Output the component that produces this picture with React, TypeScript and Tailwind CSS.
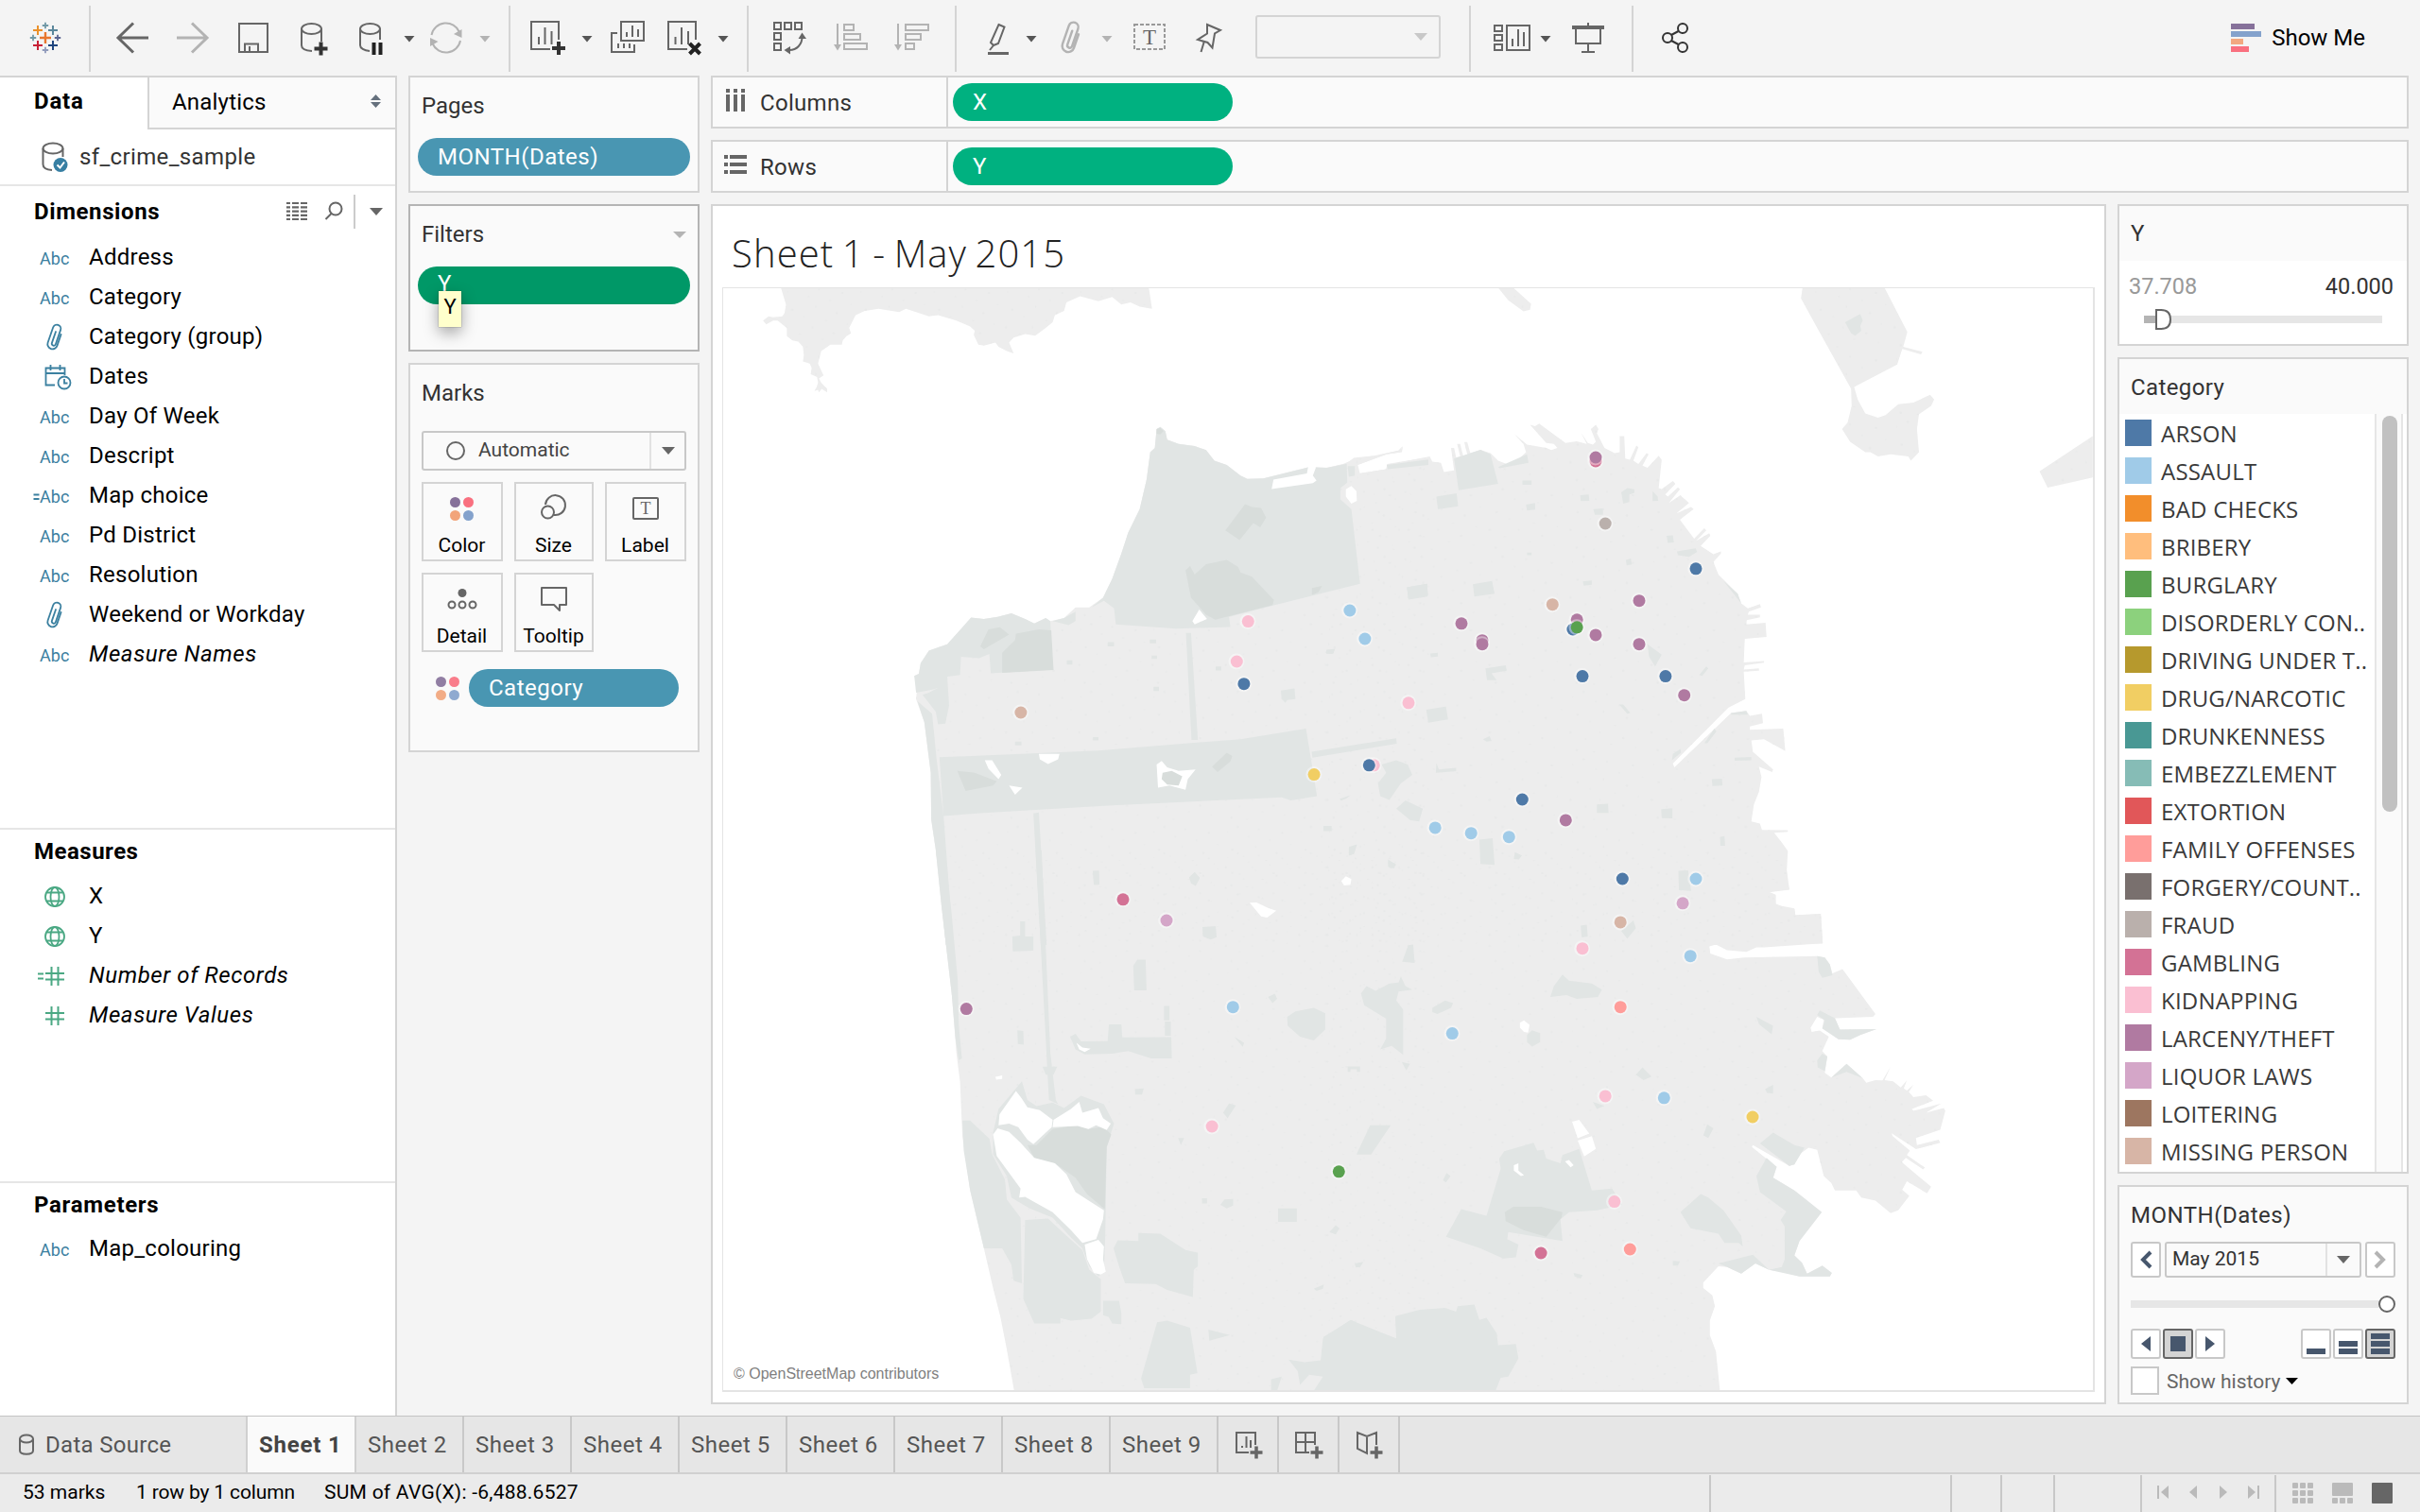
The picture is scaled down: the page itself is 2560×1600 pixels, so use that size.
import React from "react";

const ui = "font-['Roboto',sans-serif]";

/* ---------- shared bits ---------- */

function Caret({ w = 14, h = 8, color = "#666" }: { w?: number; h?: number; color?: string }) {
  return (
    <svg width={w} height={h} viewBox="0 0 14 8" preserveAspectRatio="none" className="shrink-0">
      <path d="M0 0H14L7 8Z" fill={color} />
    </svg>
  );
}

/* One slice of the toolbar; drawings use toolbar coordinates. */
function Cell({ x, w, children }: { x: number; w: number; children?: React.ReactNode }) {
  return (
    <svg
      width={w}
      height={80}
      viewBox={`${x} 0 ${w} 80`}
      className="shrink-0"
      fill="none"
      stroke="#666"
      strokeWidth={2}
    >
      {children}
    </svg>
  );
}

function Sep() {
  return <div className="mt-1.5 h-[70px] w-0.5 shrink-0 bg-[#d4d4d4]" />;
}

function Tri({ x, c = "#555" }: { x: number; c?: string }) {
  return <path d={`M${x - 5.5} 38H${x + 5.5}L${x} 44.5Z`} fill={c} stroke="none" />;
}

function Plus({ x, y, r, c, s = 2 }: { x: number; y: number; r: number; c: string; s?: number }) {
  return <path d={`M${x - r} ${y}H${x + r}M${x} ${y - r}V${y + r}`} stroke={c} strokeWidth={s} />;
}

function ClipShape() {
  return (
    <path
      d="M5.2 -5V7.6a5.2 5.2 0 0 1 -10.4 0V-9.4a4.2 4.2 0 0 1 8.4 0V6.6a2.1 2.1 0 0 1 -4.2 0V-6"
      strokeLinecap="round"
    />
  );
}

function Toolbar() {
  const g = "#b3b3b3";
  return (
    <div className="flex h-20 items-start bg-[#f4f4f4]">
      <Cell x={0} w={94}>
        <Plus x={48} y={40} r={6} c="#e8762d" s={2.4} />
        <Plus x={40} y={32} r={5} c="#eb912b" />
        <Plus x={56} y={32} r={5} c="#5b879b" />
        <Plus x={40} y={48} r={5} c="#c72035" />
        <Plus x={56} y={48} r={5} c="#1f457e" />
        <Plus x={48} y={27} r={3.2} c="#7199a6" s={1.8} />
        <Plus x={48} y={53} r={3.2} c="#8f9abb" s={1.8} />
        <Plus x={35} y={40} r={3.2} c="#7199a6" s={1.8} />
        <Plus x={61} y={40} r={3.2} c="#5c6692" s={1.8} />
      </Cell>
      <Sep />
      <Cell x={96} w={442}>
        <path d="M141 24.5L125 40L141 55.5M125 40H157" strokeWidth={3} />
        <path d="M203 24.5L219 40L203 55.5M219 40H187" stroke={g} strokeWidth={3} />
        <path d="M253 25H283V55H253ZM259 55V46.500H273V55M264 49V55" />
        <ellipse cx={329.500} cy={30.500} rx={10.500} ry={5.500} />
        <path d="M319 30.500V48C319 51 323 53.500 330 54M340 30.500V44" />
        <Plus x={339.500} y={51.500} r={7} c="#333" s={4} />
        <ellipse cx={391.500} cy={30.500} rx={10.500} ry={5.500} />
        <path d="M381 30.500V48C381 51 385 53.500 391 54M402 30.500V42" />
        <path d="M395.500 45V58M402.500 45V58" stroke="#222" strokeWidth={4} />
        <Tri x={433} />
        <path d="M456.500 37A15.500 15.500 0 0 1 486 34M487 43A15.500 15.500 0 0 1 457.500 46" stroke={g} />
        <path d="M480 36L488.500 31V40ZM463.500 44L455 40V49Z" fill={g} stroke="none" />
        <Tri x={513} c={g} />
      </Cell>
      <Sep />
      <Cell x={540} w={250}>
        <path d="M591 42V23H562V52H582M570 39V47M576.500 29V47M583.500 33V47" />
        <Plus x={591} y={51} r={7} c="#333" s={4} />
        <Tri x={621} />
        <path d="M657 23H681V43H657ZM663 34V39M669 27V39M675 31V39M653 35H647V55H671V47M654 46V51M660 46V51M666 46V51" />
        <path d="M736 42V23H707V52H727M714.500 39V47M721 29V47M728 33V47" />
        <path d="M729.500 46L740.500 57M740.500 46L729.500 57" stroke="#222" strokeWidth={4} />
        <Tri x={765} />
      </Cell>
      <Sep />
      <Cell x={792} w={218}>
        <path d="M819 24H826V31H819ZM830 24H837V31H830ZM841 24H848V31H841ZM819 35H826V42H819ZM819 46H826V53H819Z" />
        <path d="M835 53C843 53 848.500 47 848.500 39" />
        <path d="M844.500 41L848.500 34.500L853 41ZM836 49L829.500 53L836 57.500Z" fill="#666" stroke="none" />
        <path d="M886 25V50M893 26H903V32H893ZM893 36H910V42H893ZM893 46H917V52H893Z" stroke={g} />
        <path d="M882 47H890L886 53.500Z" fill={g} stroke="none" />
        <path d="M950 25V50M958 26H982V32H958ZM958 36H974V42H958ZM958 46H967V52H958Z" stroke={g} />
        <path d="M946 47H954L950 53.500Z" fill={g} stroke="none" />
      </Cell>
      <Sep />
      <Cell x={1012} w={316}>
        <path d="M1056.500 26L1062.500 28.500L1056 46L1051 48L1048 45ZM1051 48L1047 53" />
        <path d="M1045 56.500H1067" strokeWidth={3} />
        <Tri x={1091} />
        <g stroke={g} transform="translate(1133 40) rotate(19) scale(1.22)">
          <ClipShape />
        </g>
        <Tri x={1171} c={g} />
        <rect x={1200} y={26} width={32} height={26} stroke="#999" strokeDasharray="4 2" />
        <text
          x={1216}
          y={47}
          textAnchor="middle"
          fill="#666"
          stroke="none"
          className="font-['Liberation_Serif',serif] text-[23px]"
        >
          T
        </text>
        <path d="M1277 26L1291 32L1285 35.500L1282.500 50.500L1277.500 45L1267 42L1277 35.500ZM1273.500 45L1270.500 55" />
      </Cell>
      <div className="mt-4 flex h-[46px] w-[196px] shrink-0 items-center justify-end rounded-[3px] border-2 border-[#d4d4d4] pr-3">
        <Caret color="#c8c8c8" />
      </div>
      <div className="w-[30px]" />
      <Sep />
      <Cell x={1556} w={170}>
        <path d="M1581 27H1589V33H1581ZM1581 37H1589V43H1581ZM1581 47H1589V53H1581ZM1594 27H1618V53H1594ZM1600 41V49M1606 31V49M1612 34V49" />
        <Tri x={1635} />
        <path d="M1667 30V46H1693V30M1680 24V28M1680 46V55M1673 55H1687" />
        <path d="M1663 29H1697" strokeWidth={4} />
      </Cell>
      <Sep />
      <Cell x={1728} w={80}>
        <g stroke="#333">
          <circle cx={1764} cy={40} r={5} />
          <circle cx={1780} cy={30} r={5} />
          <circle cx={1780} cy={50} r={5} />
          <path d="M1768 37L1775.500 33M1768 43L1775.500 47" />
        </g>
      </Cell>
      <div className="ml-auto flex h-20 items-center gap-[11px] pr-[58px]">
        <div className="flex flex-col gap-0.5">
          <div className="h-1.5 w-[25px] bg-[#86719a]" />
          <div className="h-1.5 w-8 bg-[#84a2cc]" />
          <div className="h-1.5 w-[13px] bg-[#f2a880]" />
          <div className="h-1.5 w-[19px] bg-[#f9707f]" />
        </div>
        <span className="text-2xl text-black">Show Me</span>
      </div>
    </div>
  );
}

/* ---------- data pane ---------- */

type Kind = "abc" | "eqabc" | "clip" | "date" | "globe" | "num" | "eqnum";

function FieldIcon({ kind }: { kind: Kind }) {
  const blue = "#3b80a0";
  const green = "#4aa883";
  return (
    <svg width={94} height={42} viewBox="0 0 94 42" className="shrink-0" fill="none" stroke={blue} strokeWidth={1.800}>
      {(kind === "abc" || kind === "eqabc") && (
        <text x={42} y={29} fill={blue} stroke="none" textLength={31.500} className="text-[18px]">
          Abc
        </text>
      )}
      {kind === "eqabc" && <path d="M35.500 20.500H41.500M35.500 25H41.500" />}
      {kind === "clip" && (
        <g transform="translate(58 22) rotate(19)">
          <ClipShape />
        </g>
      )}
      {kind === "date" && (
        <>
          <path d="M58 30.500H48.500V12.500H68.500V20M48.500 18H68.500M53.500 9V15M63.500 9V15" />
          <circle cx={68} cy={28} r={6.500} fill="#fff" />
          <path d="M68 24V28.500H71.500" />
        </>
      )}
      {kind === "globe" && (
        <g stroke={green}>
          <circle cx={58} cy={22} r={10} />
          <ellipse cx={58} cy={22} rx={4.500} ry={10} />
          <path d="M49.500 17.500H66.500M49.500 26.500H66.500" />
        </g>
      )}
      {(kind === "num" || kind === "eqnum") && (
        <path d="M48 19H68M48 25.500H68M54.500 12V32M61.500 12V32" stroke={green} strokeWidth={2} />
      )}
      {kind === "eqnum" && <path d="M40 19.500H46M40 24.500H46" stroke={green} strokeWidth={2} />}
    </svg>
  );
}

function Fields({ items }: { items: [Kind, string, boolean?][] }) {
  return (
    <div>
      {items.map(([kind, name, italic]) => (
        <div key={name} className="flex h-[42px] items-center">
          <FieldIcon kind={kind} />
          <span className={`text-2xl text-black ${italic ? "tracking-[0.6px] italic" : "tracking-[0.25px]"}`}>{name}</span>
        </div>
      ))}
    </div>
  );
}

function DataPane() {
  return (
    <div className="flex w-[420px] shrink-0 flex-col border-t-2 border-r-2 border-[#d4d4d4] bg-white">
      <div className="flex h-[55px] shrink-0">
        <div className="flex w-[156px] items-center pb-1.5 pl-9 text-2xl font-bold tracking-[0.8px] text-black">Data</div>
        <div className="flex flex-1 items-center border-b-2 border-l-2 border-[#d4d4d4] bg-[#fafafa] pl-6">
          <span className="pb-0.5 text-2xl tracking-[0.2px] text-black">Analytics</span>
          <svg width={11} height={14} viewBox="0 0 10 14" preserveAspectRatio="none" className="mr-[15px] mb-1 ml-auto" fill="#65707d">
            <path d="M5 0L10 6H0ZM0 8H10L5 14Z" />
          </svg>
        </div>
      </div>
      <div className="flex h-[58px] shrink-0 items-center">
        <svg width={84} height={58} viewBox="0 137 84 58" fill="none" stroke="#666" strokeWidth={2}>
          <ellipse cx={56} cy={157} rx={10.500} ry={5.500} />
          <path d="M45.500 157V174C45.500 177 49 179.500 55 180M66.500 157V166" />
          <circle cx={64} cy={174.500} r={7.500} fill="#377fa3" stroke="none" />
          <path d="M60.500 174.500L63.500 177.500L68 171.500" stroke="#fff" />
        </svg>
        <span className="text-2xl tracking-[0.35px] text-[#333]">sf_crime_sample</span>
      </div>
      <div className="h-[681px] shrink-0 border-t-2 border-[#e6e6e6]">
        <div className="flex h-[54px] items-center pr-[13px] pl-9">
          <span className="text-2xl font-bold tracking-[0.6px] text-black">Dimensions</span>
          <svg width={90} height={54} viewBox="300 197 90 54" className="ml-auto" fill="none" stroke="#666" strokeWidth={2}>
            <path d="M302 215H326M302 219.300H326M302 223.600H326M302 227.900H326M302 232H326" strokeDasharray="4 2 7 2 7 2" strokeWidth={2.200} />
            <circle cx={354} cy={221} r={6.500} />
            <path d="M349.500 226L343.500 232" />
            <path d="M374 206V242" stroke="#ccc" />
          </svg>
          <Caret w={14} h={8} />
        </div>
        <Fields
          items={[
            ["abc", "Address"],
            ["abc", "Category"],
            ["clip", "Category (group)"],
            ["date", "Dates"],
            ["abc", "Day Of Week"],
            ["abc", "Descript"],
            ["eqabc", "Map choice"],
            ["abc", "Pd District"],
            ["abc", "Resolution"],
            ["clip", "Weekend or Workday"],
            ["abc", "Measure Names", true],
          ]}
        />
      </div>
      <div className="h-[374px] shrink-0 border-t-2 border-[#e6e6e6]">
        <div className="mb-1 flex h-[45px] items-center pl-9 text-2xl font-bold tracking-[0.5px] text-black">Measures</div>
        <Fields
          items={[
            ["globe", "X"],
            ["globe", "Y"],
            ["eqnum", "Number of Records", true],
            ["num", "Measure Values", true],
          ]}
        />
      </div>
      <div className="border-t-2 border-[#e6e6e6]">
        <div className="mb-[3px] flex h-[45px] items-center pl-9 text-2xl font-bold tracking-[0.7px] text-black">Parameters</div>
        <Fields items={[["abc", "Map_colouring"]]} />
      </div>
    </div>
  );
}

/* ---------- shelves ---------- */

function Dots() {
  return (
    <div className="grid grid-cols-2 gap-[3px]">
      <div className="size-[11px] rounded-full bg-[#86719a]" />
      <div className="size-[11px] rounded-full bg-[#f9707f]" />
      <div className="size-[11px] rounded-full bg-[#f2a47a]" />
      <div className="size-[11px] rounded-full bg-[#84a2cc]" />
    </div>
  );
}

function MarkButton({ label, wide, children }: { label: string; wide?: boolean; children: React.ReactNode }) {
  return (
    <div
      className={`flex h-[84px] flex-col items-center border-2 border-[#d4d4d4] bg-[#fafafa] pr-px ${wide ? "w-[86px]" : "w-[84px]"}`}
    >
      <div className="flex h-[52px] items-center">{children}</div>
      <span className="text-[21px] leading-[26px] text-black">{label}</span>
    </div>
  );
}

function ShelfColumn() {
  const icon = { fill: "none", stroke: "#666", strokeWidth: 2 };
  return (
    <div className="flex w-[308px] shrink-0 flex-col gap-3">
      <div className="h-[124px] border-2 border-[#d4d4d4] bg-[#fafafa] px-2">
        <div className="flex h-[62px] items-center pb-0.5 pl-1 text-2xl text-[#333]">Pages</div>
        <div className="mt-0.5 flex h-10 items-center rounded-[20px] bg-[#4996b2] pl-[21px] text-2xl tracking-[0.5px] text-white">
          MONTH(Dates)
        </div>
      </div>
      <div className="h-[156px] border-2 border-[#b4b4b4] bg-[#fafafa] px-2">
        <div className="flex h-[60px] items-center justify-between pr-1 pl-1 text-2xl text-[#333]">
          <span>Filters</span>
          <Caret color="#b4b4b4" h={7} />
        </div>
        <div className="relative mt-1 flex h-10 items-center rounded-[20px] bg-[#009867] pb-1 pl-[21px] text-2xl text-white">
          Y
          <div className="absolute top-[26px] left-[22px] flex h-[38px] w-6 justify-center bg-[#ffffcc] pt-1 text-[22px] leading-[26px] text-black shadow-[0_6px_16px_rgba(0,0,0,0.35),0_0_1px_rgba(0,0,0,0.6)]">
            Y
          </div>
        </div>
      </div>
      <div className="h-[412px] border-2 border-[#d4d4d4] bg-[#fafafa] px-3">
        <div className="flex h-[60px] items-center text-2xl text-[#333]">Marks</div>
        <div className="mt-2.5 flex h-[42px] w-[280px] items-center rounded-[3px] border-2 border-[#c8c8c8]">
          <svg width={20} height={20} viewBox="0 0 20 20" className="ml-6 shrink-0" {...icon}>
            <circle cx={10} cy={10} r={9} />
          </svg>
          <span className="ml-3.5 text-[21px] text-[#444]">Automatic</span>
          <div className="ml-auto flex h-full w-[37px] items-center justify-center border-l-2 border-[#e2e2e2]">
            <Caret />
          </div>
        </div>
        <div className="mt-3 flex w-[280px] flex-wrap gap-3">
          <MarkButton label="Color" wide>
            <Dots />
          </MarkButton>
          <MarkButton label="Size">
            <svg width={32} height={32} viewBox="0 0 32 32" {...icon}>
              <path d="M7 12A10.500 10.500 0 1 1 16 23" />
              <circle cx={9.500} cy={20} r={6.500} />
            </svg>
          </MarkButton>
          <MarkButton label="Label" wide>
            <svg width={30} height={26} viewBox="0 0 30 26" {...icon}>
              <rect x={2} y={2} width={26} height={22} rx={1} />
              <text x={15} y={18.500} textAnchor="middle" fill="#666" stroke="none" className="font-['Liberation_Serif',serif] text-[18px]">
                T
              </text>
            </svg>
          </MarkButton>
          <MarkButton label="Detail" wide>
            <svg width={32} height={24} viewBox="0 0 32 24" {...icon}>
              <circle cx={16} cy={5.500} r={4.500} fill="#666" stroke="none" />
              <circle cx={5} cy={18} r={3.500} />
              <circle cx={16} cy={18} r={3.500} />
              <circle cx={27} cy={18} r={3.500} />
            </svg>
          </MarkButton>
          <MarkButton label="Tooltip">
            <svg width={30} height={28} viewBox="0 0 30 28" {...icon}>
              <path d="M2 2H28V20H21V26L15 20H2Z" strokeLinejoin="round" />
            </svg>
          </MarkButton>
        </div>
        <div className="mt-[18px] flex h-10 items-center pl-[15px]">
          <div className="opacity-90">
            <Dots />
          </div>
          <div className="ml-2.5 flex h-10 w-[222px] items-center rounded-[20px] bg-[#4996b2] pl-[21px] text-2xl tracking-[0.5px] text-white">
            Category
          </div>
        </div>
      </div>
    </div>
  );
}

function Shelf({ label, pill, children }: { label: string; pill: string; children: React.ReactNode }) {
  return (
    <div className="flex h-14 shrink-0 items-stretch border-2 border-[#d4d4d4] bg-[#fafafa]">
      <div className="flex w-[249px] items-center border-r-2 border-[#d4d4d4]">
        {children}
        <span className="pt-px text-2xl tracking-[0.3px] text-[#333]">{label}</span>
      </div>
      <div className="ml-[5px] flex h-10 w-[296px] items-center self-center rounded-[20px] bg-[#00b180] pl-[21px] text-2xl text-white">
        {pill}
      </div>
    </div>
  );
}

/* ---------- map ---------- */

const QUAD = {
  nw: "translate(750 300) scale(.48469 .44643)",
  ne: "translate(1400 300) scale(.53571 .44643)",
  sw: "translate(750 900) scale(.48469 .38265)",
  se: "translate(1400 900) scale(.53571 .38265)",
};

const LAND = {
  nw: "M157 10L168 50 165 70 160 78 140 80 130 78 118 88 125 97 140 88 150 88 160 97 170 105 170 125 182 135 195 138 205 150 207 170 205 185 220 190 224 200 222 215 236 222 238 235 235 245 230 255 238 252 240 258 246 250 258 258 258 250 245 235 240 225 250 218 238 190 245 160 265 145 290 145 292 135 300 125 310 118 306 105 320 75 340 65 370 60 415 68 430 60 480 78 500 75 540 88 570 102 580 112 578 122 588 145 600 147 625 140 632 150 650 160 665 166 655 140 665 128 690 120 712 124 735 105 750 92 755 75 775 65 780 45 810 30 850 42 880 32 900 50 920 45 940 55 967 60 960 10ZM518 1568L500 1380 485 1270 484 1160 470 1040 452 985 455 950 448 930 458 925 462 900 480 870 520 855 545 825 572 792 600 795 630 790 660 782 690 795 710 806 735 793 745 800 775 793 800 768 830 768 860 745 880 700 900 640 915 590 940 535 955 465 963 400 973 390 977 345 985 340 996 350 1000 370 1025 380 1060 385 1085 395 1103 420 1130 430 1160 455 1175 463 1210 462 1310 435 1350 437 1385 427 1415 413 1450 410 1505 396 1513 386 1508 400 1478 405 1415 430 1418 450 1478 440 1480 428 1568 412V1568Z",
  ne: "M0 438L45 427 60 413 100 408 152 395 157 385 155 400 125 405 68 430 72 450 125 440 125 430 210 410 215 422 232 425 238 447 258 443 252 390 258 390 262 412 270 410 264 380 270 380 276 408 284 405 278 376 284 376 290 402 310 394 330 402 345 420 362 428 382 420 400 400 395 380 376 356 402 382 440 390 450 395 462 390 455 380 440 378 408 335 418 338 426 332 478 378 500 374 520 380 508 352 522 378 532 382 538 375 528 345 538 335 543 345 540 355 555 390 575 402 585 400 585 362 594 362 596 415 605 418 618 384 622 388 612 420 622 428 638 402 642 405 630 432 640 437 662 408 668 418 662 485 668 487 690 468 695 475 675 500 680 505 700 483 704 488 682 520 705 502 722 520 697 545 726 530 731 535 704 560 732 605 752 580 756 585 736 610 762 592 764 598 745 622 770 642 785 635 785 640 770 660 780 690 818 735 825 758 838 770 862 760 864 768 840 778 838 785 862 785 862 791 836 798 835 808 873 804 875 838 832 842 830 898 870 895 870 899 832 905 830 915 860 912 860 918 830 920 833 985 800 1005 690 1138 693 1147 805 1018 835 1013 842 1025 866 1020 868 1042 842 1050 842 1058 908 1055 912 1108 870 1080 845 1083 848 1110 888 1152 886 1158 860 1145 865 1170 860 1205 850 1235 845 1275 862 1280 866 1295 917 1296 917 1300 890 1302 905 1325 917 1345 915 1390 920 1437 880 1443 880 1448 893 1450 893 1470 912 1480 930 1483 932 1497 982 1494 986 1564 905 1568H0ZM946 10L943 35 975 105 1042 250 1043 290 1035 330 1024 345 1040 375 1070 400 1080 400 1095 410 1120 405 1155 410 1160 420 1176 400 1172 345 1176 310 1200 290 1206 275 1198 264 1165 282 1135 286 1110 312 1095 318 1070 308 1055 275 1048 245 1133 192 1143 155 1180 168 1183 162 1145 150 1153 115 1108 10ZM345 10L365 40 395 66 408 62 410 48 375 10ZM1519 362L1414 445 1430 484 1519 460Z",
  sw: "M495 0L508 160 530 400 540 560 548 640 553 790 570 940 600 1100 620 1210 636 1290 650 1380 666 1494H1568V0Z",
  se: "M0 0H915L913 60 920 108 878 113 893 122 893 150 930 160 932 180 982 175 986 257 870 268 855 268 835 280 797 276 775 260 762 265 764 285 797 301 830 296 975 292 990 296 1000 315 1005 340 1025 328 1090 452 1085 460 1010 464 1020 495 1092 494 1060 510 1040 523 1017 522 985 492 988 468 975 460 962 490 964 502 980 498 998 515 985 555 995 570 990 615 1003 628 1033 590 1065 630 1072 642 1090 635 1104 636 1120 598 1108 635 1125 638 1140 655 1152 636 1146 658 1152 664 1165 648 1156 668 1165 682 1190 677 1204 692 1162 715 1165 720 1220 700 1190 725 1225 712 1228 720 1218 772 1170 795 1172 815 1215 800 1218 808 1170 826 1122 782 1124 790 1158 830 1152 842 1188 877 1184 882 1150 850 1142 862 1200 930 1192 948 1152 915 1143 938 1157 955 1135 995 1120 1003 1090 968 1062 960 1052 940 1010 940 1003 920 988 900 975 828 958 822 940 840 930 868 920 872 848 815 846 820 895 875 888 905 930 940 984 1000 940 1080 930 1120 945 1140 955 1170 975 1165 985 1148 1004 1168 1000 1178 940 1178 905 1165 880 1160 853 1142 825 1170 797 1152 780 1150 750 1195 750 1210 768 1230 773 1260 763 1300 763 1340 775 1385 783 1494H0Z",
};

const PARK = {
  nw: "M835 768L860 745 880 700 900 640 915 590 940 535 955 465 963 400 973 390 977 345 985 340 996 350 1000 370 1025 380 1060 385 1085 395 1103 420 1130 430 1160 455 1175 463 1210 462 1310 435 1350 437 1392 427 1393 472 1378 485 1378 512 1402 535 1421 712 1235 762 1135 790 1138 814 1020 818 888 808 884 770 862 752ZM572 792L600 795 630 790 660 782 690 795 710 806 735 793 745 800 750 915 615 924 612 878 590 888 550 885 548 928 520 932 524 1000 516 1043 500 1045 495 1015 466 975 480 970 500 958 490 962 452 970 448 930 458 925 462 900 480 870 520 855 545 825ZM750 800L775 793 800 778 800 800 785 810ZM503 1123L850 1107 1160 1080 1303 1055 1327 1215 1270 1225 1250 1218 880 1237 600 1255 512 1262ZM1315 1110L1500 1078 1501 1091 1317 1124ZM1041 828L1052 828 1067 1082 1053 1082ZM708 1256L720 1254 737 1568 724 1568ZM455 990L487 1020 497 1130 512 1262 533 1568 517 1568 500 1380 485 1270 484 1160 470 1040ZM1468 1140L1500 1130 1525 1140 1535 1165 1510 1185 1485 1224 1465 1215 1460 1185 1478 1160ZM1500 1245L1520 1225 1558 1245 1550 1275 1530 1272ZM838 1392H851V1425H840ZM1048 1408L1060 1395 1071 1410 1062 1428 1052 1422ZM1523 720L1568 712V742L1527 749ZM1248 965L1278 960 1280 985 1262 987 1258 994 1250 985ZM870 850H884V860H870ZM962 844H976V853H962ZM966 882H978V890H966ZM781 893H793V903H781ZM970 956H982V966H970ZM1106 908H1118V917H1106ZM838 1075H850V1083H838ZM668 1086H682V1095H668ZM1348 868L1367 866 1360 878 1346 876ZM1341 1286H1359V1298H1341ZM1376 1222L1400 1213 1392 1220 1380 1226ZM1397 1335L1414 1330 1408 1352 1398 1356ZM1482 1365L1500 1378 1490 1386 1482 1382Z",
  ne: "M258 415L310 394 330 405 345 475 267 490ZM345 435L402 405 405 425 348 438ZM125 430L207 417 207 430 127 440ZM48 433H62V455L50 458ZM223 505L263 497 266 528 226 535ZM165 720L204 712 207 740 168 748ZM295 713L333 705 338 735 298 742ZM320 912L360 905 362 918 332 924 342 940 323 940ZM203 1010L242 1003 246 1033 207 1041ZM308 1318L334 1315 338 1378 310 1376ZM588 495L600 485 614 488 614 496 604 500V518L592 522ZM393 467H411V477H393ZM400 524L418 520V536L402 538ZM507 502L524 500 525 515 508 516ZM533 535L552 533 552 548 536 548ZM540 1235L562 1233 563 1255 540 1255ZM667 1246L689 1244 689 1268 668 1267ZM767 1175L787 1174 788 1190 768 1191ZM701 1392L720 1391 726 1440 702 1438ZM698 635L735 628 738 636 722 648 700 644ZM640 855L668 880 655 908 643 885ZM790 705L818 735 825 758ZM678 598L690 597 692 614 680 615ZM223 1137L228 1152 262 1148 262 1156 222 1160ZM584 998L592 998 606 1018 600 1020ZM742 928L756 908 760 912 748 930ZM690 1115L705 1103 706 1112 688 1130ZM752 1090L772 1055 776 1062 758 1090ZM805 1018L835 1013 838 1022 805 1022ZM812 1124L845 1122 845 1130 812 1131ZM783 1312L792 1310 793 1333 784 1333ZM508 1522L520 1520 522 1548 510 1550ZM588 1535L612 1510 617 1528 600 1553ZM315 1080L328 1073 332 1084 322 1086ZM597 655L607 652 609 666 599 668ZM512 706L530 704V714L514 716ZM402 638H411V644H402ZM211 877L226 875V884L212 886ZM50 1338L66 1330 60 1352 50 1356ZM128 1370L142 1375 140 1386 130 1385ZM650 492L660 505 661 515 650 516ZM378 1348L392 1356 386 1365 376 1364ZM0 1286L14 1287V1297H0ZM6 870L22 868 20 877 6 878ZM1030 92L1060 72 1065 88 1060 100 1062 112 1050 124 1042 118Z",
  sw: "M713 0L726 0 745 560 757 690 762 702 742 690ZM495 0L515 0 530 180 543 360 545 480 552 575 545 580 538 520 530 400 508 160ZM662 238L679 235V196H690V238H708V277L663 279ZM926 318L935 302 953 302 955 387 928 387ZM838 57L851 56 852 94 840 95ZM1048 75L1060 60 1071 75 1062 98ZM1077 212L1106 209 1108 240 1095 246 1078 238ZM788 515L800 507 812 528 870 527 873 481 900 481 902 517 1009 516 1010 575 965 575 915 555 880 562 820 564 800 550ZM993 430H1005V470H993ZM995 473H1008V512H995ZM673 497L686 499 687 537 674 535ZM728 598H760L752 620 735 620ZM1262 460L1280 445 1320 435 1345 450 1345 495 1320 525 1290 515 1263 485ZM1423 395L1435 375 1455 388 1485 368 1505 365 1510 348 1520 375 1535 385 1505 390 1500 415 1515 440 1515 565 1490 540 1465 550 1478 520 1478 465 1430 428ZM683 638L695 690 715 707 750 697 775 712 812 678 862 702 884 755 868 820 865 1060 862 1165 850 1178 830 1150 815 1100 790 1070 750 1015 700 990 660 960 650 900 620 840 620 780 632 715ZM553 747L570 747 612 797 618 840 646 910 650 965 680 1015 683 1197 665 1190 660 1145 640 1100 600 1100 570 940 556 830ZM690 1022L740 1018 780 1065 815 1105 830 1160 855 1185 855 1275 835 1295 790 1300 767 1293 767 1308 710 1308 686 1240ZM883 1100L892 1078 937 1080 937 1058 985 1060 1040 1105 1067 1112 1067 1150 1058 1160 1056 1235 1000 1215 975 1199 908 1197 895 1150ZM860 1245L895 1245 900 1280V1310L880 1308 872 1290 860 1285ZM978 1305L1000 1300 1050 1320 1066 1445 1050 1450 1050 1487 950 1487 943 1460ZM1090 1325L1137 1340 1092 1356ZM1443 760L1488 760 1445 841 1413 841ZM1242 990H1283V1027H1242ZM1265 1408L1300 1415 1335 1410 1340 1350 1400 1298 1500 1350 1498 1290 1568 1270V1494H1320L1340 1455 1310 1450 1290 1478 1285 1440ZM1227 1462L1250 1455 1240 1494 1227 1494ZM930 660L949 658 945 675 930 675ZM1122 725L1135 700 1150 705 1132 740ZM1116 980L1125 965 1144 964 1144 982 1130 990ZM1354 1055L1368 1036 1376 1045 1368 1062ZM1076 962H1087V976H1076ZM1024 795L1037 795 1030 815ZM1220 405L1235 396 1240 410 1230 422ZM1146 515L1168 532 1165 543ZM1320 1212L1342 1200 1340 1212 1326 1218ZM1410 1143L1428 1138 1420 1154ZM1394 597H1421V612H1414V605H1400V612H1394ZM1512 585L1530 590 1522 608ZM1526 262L1537 260 1540 311 1513 308Z",
  se: "M0 1345L55 1298 80 1318 145 1350 142 1288 190 1270 240 1265 262 1275 265 1260 298 1256 308 1298 322 1292 342 1335 345 1368 380 1365 385 1405 365 1455 350 1458 340 1494 0 1494ZM347 852L357 832 415 808 422 830 435 828 440 852 468 865 472 842 505 825 530 940 570 935 590 980 540 995 485 1000 468 1020 472 1080 365 1055 363 1075 385 1090 380 1125 355 1128 310 1100 242 1068 272 992 322 1010 350 880ZM448 405L455 375 472 343 485 360 530 368 550 385 542 405 500 410 480 400ZM705 1000L745 950 760 960 790 995 825 1065 828 1095 820 1085 792 1085 780 1060 725 1045ZM875 850L895 875 888 905 930 940 984 1000 940 1080 930 1120 945 1140 955 1170 985 1148 1004 1168 1000 1178 940 1178 880 1160 905 1152 911 1130 911 1040 903 1022 914 998 862 945 855 900ZM862 810L888 780 930 815 950 822 930 868 920 872ZM780 1142L848 1118 880 1160 853 1142 825 1170 797 1152ZM975 292L990 296 1000 315 1005 345 985 352 978 335ZM980 442L1010 464 1020 495 1092 494 1060 510 1040 523 1017 522 985 492 990 470 975 455ZM1003 628L1033 590 1065 630 1033 612ZM975 580L985 562 995 570 990 610 976 600ZM855 460L888 485 885 508 860 480ZM617 620L630 600 648 625 632 635ZM750 788L758 757 770 768 760 795ZM402 510L412 497 428 505 428 530 412 542 402 530ZM215 435L240 415 256 422 252 435 225 452 215 447ZM532 695L555 706 540 715ZM872 660L888 648 888 672 876 670ZM236 912L243 892 251 900 242 918ZM690 1135L704 1136 700 1148 690 1148ZM494 1168L512 1174 508 1184 496 1178ZM62 1143L77 1138 72 1152 64 1153Z",
};

const PARK_DARK = {
  nw: "M640 923L752 916 747 822 720 820 670 830 668 845 640 875ZM592 860L610 820 635 815 655 832 600 867ZM1127 585L1170 523 1185 530 1205 532 1216 555 1203 578 1188 568 1158 608ZM1040 680L1050 670 1060 690 1085 665 1130 655 1155 672 1160 685 1185 695 1220 735 1233 750 1230 762 1105 797 1085 785 1052 745ZM542 1155L580 1160 628 1180 620 1190 560 1203ZM1098 1145L1130 1112 1142 1120 1138 1133 1110 1158ZM977 345L985 342 992 350 985 358 977 356ZM1316 722L1338 717 1330 732 1316 738Z",
  sw: "M750 770L800 760 830 770 860 764 878 785 868 820 864 992 825 950 800 905 755 865 710 850 695 815 715 815Z",
  se: "M358 1000L375 985 430 985 472 1000 470 1015 440 1068 395 1050 360 1025Z",
};

const WATER = {
  nw: "M1055 800L1070 773 1087 795 1060 808ZM1228 487L1232 465 1305 450 1308 433 1325 435 1318 455 1326 467 1318 473 1235 486ZM1390 488L1402 480 1413 492 1414 515 1402 522 1390 505ZM602 1130L618 1130 638 1165 632 1175 610 1150ZM720 1115L765 1115 762 1128 740 1139 722 1128ZM655 1190L684 1195 668 1212ZM977 1140L988 1132 1000 1147 1025 1155 1062 1152 1045 1175 1040 1200 1005 1190 980 1195ZM1180 1468L1195 1467 1220 1480 1238 1487 1218 1503 1205 1500ZM1380 1416L1390 1405 1402 1412 1400 1425 1386 1427Z",
  sw: "M802 532L815 545 833 548 820 557 808 550ZM670 665L682 685 695 710 722 718 750 745 748 765 708 812 695 800 675 765 655 755 632 760 634 730ZM752 745L790 715 808 695 815 725 850 712 860 740 877 755 868 773 845 760 828 770 805 762 750 765ZM620 785L630 768 655 778 680 808 710 850 755 865 780 895 800 945 862 995 860 1020 845 1075 815 1085 790 1050 750 1000 690 958 677 960 680 935 628 845ZM820 1090L850 1077 862 1095 860 1130 866 1165 855 1173 840 1168 825 1130ZM625 626L640 622 640 632 627 634Z",
  se: "M491 750L505 745 525 783 502 796ZM502 802L530 790 538 825 515 846ZM388 476L396 470 407 482 404 504 396 502 388 490ZM376 870L385 865 385 885 396 898 390 900 376 885ZM477 860L485 856 494 870 488 876Z",
};

const C = {
  arson: "#4e79a7",
  assault: "#a0cbe8",
  burglary: "#59a14f",
  drug: "#f1ce63",
  family: "#ff9d9a",
  fraud: "#bab0ac",
  gambling: "#d37295",
  kidnap: "#fabfd2",
  larceny: "#b07aa1",
  liquor: "#d4a6c8",
  missing: "#d7b5a6",
};

const MARKS: [number, number, string][] = [
  [1320, 657.600, C.kidnap], [1308, 700, C.kidnap], [1315.600, 723.700, C.arson], [1079.600, 754, C.missing],
  [1427.600, 646, C.assault], [1443.600, 676, C.assault], [1489.700, 743.800, C.kidnap], [1389.800, 819.600, C.drug],
  [1453, 809.800, C.kidnap], [1448, 809.800, C.arson], [1187.700, 951.800, C.gambling], [1233.700, 974, C.liquor],
  [1687.700, 488, C.gambling], [1687.700, 484, C.larceny], [1697.900, 554, C.fraud], [1793.700, 601.800, C.arson],
  [1642, 639.700, C.missing], [1733.700, 635.700, C.larceny], [1545.700, 659.800, C.larceny], [1567.700, 677.700, C.larceny],
  [1567.700, 681.700, C.larceny], [1667.900, 655.800, C.larceny], [1663.600, 666, C.arson], [1667.900, 663.800, C.burglary],
  [1687.700, 671.900, C.larceny], [1733.700, 681.700, C.larceny], [1673.700, 715.600, C.arson], [1761.600, 715.600, C.arson],
  [1781.400, 735.700, C.larceny], [1610, 846, C.arson], [1656, 867.900, C.larceny], [1517.900, 875.900, C.assault],
  [1555.900, 881.700, C.assault], [1596, 885.700, C.assault], [1716, 930, C.arson], [1793.700, 930, C.assault],
  [1779.800, 955.800, C.liquor], [1713.900, 975.900, C.missing], [1673.700, 1003.700, C.kidnap], [1787.900, 1011.700, C.assault],
  [1713.900, 1065.700, C.family], [1536, 1093.600, C.assault], [1697.900, 1159.900, C.kidnap], [1760, 1161.800, C.assault],
  [1853.700, 1182, C.drug], [1416, 1239.800, C.burglary], [1707.500, 1271.600, C.kidnap], [1629.800, 1326, C.gambling],
  [1724, 1322, C.family], [1022, 1067.600, C.larceny], [1304, 1065.700, C.assault], [1281.800, 1192, C.kidnap],
];

const SPECKS = [
  [12, 20], [34, 8], [58, 31], [80, 14], [104, 40], [131, 22], [150, 50], [22, 62], [47, 78], [73, 55],
  [96, 88], [119, 70], [142, 96], [8, 104], [38, 120], [66, 104], [88, 132], [112, 118], [136, 140], [20, 146], [54, 150],
];

function Layer({ shapes, fill }: { shapes: Partial<Record<keyof typeof QUAD, string>>; fill: string }) {
  return (
    <g fill={fill}>
      {(Object.keys(shapes) as (keyof typeof QUAD)[]).map((k) => (
        <path key={k} d={shapes[k]} transform={QUAD[k]} />
      ))}
    </g>
  );
}

function MapView() {
  return (
    <div className="relative ml-2.5 h-[1169px] w-[1452px] border-t border-r-2 border-b-2 border-l border-[#e4e4e4] bg-white">
      <svg width={1449} height={1166} viewBox="765 305 1449 1166" className="block">
        <defs>
          <pattern id="blocks" width="160" height="160" patternUnits="userSpaceOnUse">
            {SPECKS.map(([x, y], i) => (
              <ellipse key={i} cx={x} cy={y} rx={i % 3 === 0 ? 1.600 : 2.600} ry={i % 2 ? 2.800 : 1.600} fill="#e8e9e9" />
            ))}
          </pattern>
        </defs>
        <Layer shapes={LAND} fill="#ededed" />
        <Layer shapes={LAND} fill="url(#blocks)" />
        <Layer shapes={PARK} fill="#e1e5e4" />
        <Layer shapes={PARK_DARK} fill="#d8dddb" />
        <Layer shapes={WATER} fill="#ffffff" />
        <path d="M990 1160L1010 1155 1033 1168 1025 1190 1000 1188 988 1175Z" fill="#d8dddb" transform={QUAD.nw} />
        {MARKS.map(([x, y, c], i) => (
          <g key={i}>
            <circle cx={x} cy={y} r={8.500} fill="#fff" fillOpacity={0.4} />
            <circle cx={x + 0.3} cy={y} r={6.500} fill={c} />
          </g>
        ))}
      </svg>
      <span className="absolute bottom-[5px] left-[11px] font-['Liberation_Sans',Arial,sans-serif] text-base text-[#808080]">
        © OpenStreetMap contributors
      </span>
    </div>
  );
}

/* ---------- right side ---------- */

const LEGEND: [string, string][] = [
  ["#4e79a7", "ARSON"],
  ["#a0cbe8", "ASSAULT"],
  ["#f28e2b", "BAD CHECKS"],
  ["#ffbe7d", "BRIBERY"],
  ["#59a14f", "BURGLARY"],
  ["#8cd17d", "DISORDERLY CON.."],
  ["#b6992d", "DRIVING UNDER T.."],
  ["#f1ce63", "DRUG/NARCOTIC"],
  ["#499894", "DRUNKENNESS"],
  ["#86bcb6", "EMBEZZLEMENT"],
  ["#e15759", "EXTORTION"],
  ["#ff9d9a", "FAMILY OFFENSES"],
  ["#79706e", "FORGERY/COUNT.."],
  ["#bab0ac", "FRAUD"],
  ["#d37295", "GAMBLING"],
  ["#fabfd2", "KIDNAPPING"],
  ["#b07aa1", "LARCENY/THEFT"],
  ["#d4a6c8", "LIQUOR LAWS"],
  ["#9d7660", "LOITERING"],
  ["#d7b5a6", "MISSING PERSON"],
];

function SmallButton({ active, tall, children }: { active?: boolean; tall?: boolean; children: React.ReactNode }) {
  return (
    <div
      className={`flex w-8 shrink-0 items-center justify-center rounded-[3px] border-2 ${tall ? "h-[38px]" : "h-8"} ${
        active ? "border-[#666] bg-[#d4d4d4]" : "border-[#c8c8c8] bg-white"
      }`}
    >
      {children}
    </div>
  );
}

function Bars({ n }: { n: number }) {
  return (
    <div className="flex h-[22px] flex-col justify-end gap-0.5">
      {Array.from({ length: n }, (_, i) => (
        <div key={i} className="h-1.5 w-5 bg-[#47576d]" />
      ))}
    </div>
  );
}

function RightColumn() {
  return (
    <div className="flex w-[308px] shrink-0 flex-col gap-3">
      <div className="h-[150px] border-2 border-[#d4d4d4] bg-white">
        <div className="flex h-[58px] items-center bg-[#fafafa] pl-3 text-2xl text-[#333]">Y</div>
        <div className="flex items-center justify-between pt-[11px] pr-3.5 pl-2.5 text-[23.500px] leading-8">
          <span className="text-[#999]">37.708</span>
          <span className="text-[#333]">40.000</span>
        </div>
        <svg width={304} height={26} viewBox="2242 325 304 26" className="mt-1.5">
          <path d="M2268 334H2520V342H2268Z" fill="#e6e6e6" />
          <path d="M2268 334H2280V342H2268Z" fill="#b4b4b4" />
          <path d="M2281 328H2286C2293 328 2296 332 2296 338C2296 344 2293 348 2286 348H2281Z" fill="#fff" stroke="#666" strokeWidth={2} />
        </svg>
      </div>

      <div className="flex h-[864px] flex-col border-2 border-[#d4d4d4] bg-white">
        <div className="flex h-[58px] shrink-0 items-center bg-[#fafafa] pt-px pl-3 text-2xl tracking-[0.4px] text-[#333]">Category</div>
        <div className="flex min-h-0 flex-1">
          <div className="w-[270px] shrink-0 pl-1.5">
            {LEGEND.map(([color, name]) => (
              <div key={name} className="flex h-10 items-center">
                <div className="size-7 shrink-0" style={{ background: color }} />
                <span className="ml-2.5 pt-px font-['Open_Sans',sans-serif] text-2xl tracking-[0.2px] whitespace-nowrap text-[#3a3a3a]">
                  {name}
                </span>
              </div>
            ))}
          </div>
          <div className="w-[30px] border-r-2 border-l-2 border-[#e6e6e6] bg-[#fafafa] px-1.5 pt-0.5">
            <div className="h-[419px] w-4 rounded-lg bg-[#c1c1c1]" />
          </div>
        </div>
      </div>

      <div className="h-[232px] border-2 border-[#d4d4d4] bg-[#fafafa] px-3">
        <div className="flex h-[58px] items-center pt-px text-2xl tracking-[0.5px] text-[#333]">MONTH(Dates)</div>
        <div className="flex gap-1">
          <SmallButton tall>
            <svg width={14} height={20} viewBox="0 0 14 20" fill="none" stroke="#47576d" strokeWidth={4}>
              <path d="M12 2L4 10L12 18" />
            </svg>
          </SmallButton>
          <div className="flex h-[38px] w-[208px] items-center rounded-[3px] border-2 border-[#c8c8c8] pl-1.5 text-[21px] text-[#333]">
            May 2015
            <div className="ml-auto flex h-full w-[36px] items-center justify-center border-l-2 border-[#e2e2e2]">
              <Caret />
            </div>
          </div>
          <SmallButton tall>
            <svg width={14} height={20} viewBox="0 0 14 20" fill="none" stroke="#b4b4b4" strokeWidth={4}>
              <path d="M2 2L10 10L2 18" />
            </svg>
          </SmallButton>
        </div>
        <div className="mt-[19px] flex h-[18px] items-center">
          <div className="h-2 w-[262px] bg-[#e6e6e6]" />
          <div className="size-[18px] rounded-full border-2 border-[#666] bg-white" />
        </div>
        <div className="mt-[17px] flex gap-0.5">
          <SmallButton>
            <svg width={10} height={16} viewBox="0 0 10 16" fill="#47576d">
              <path d="M10 0V16L0 8Z" />
            </svg>
          </SmallButton>
          <SmallButton active>
            <div className="size-4 bg-[#47576d]" />
          </SmallButton>
          <SmallButton>
            <svg width={10} height={16} viewBox="0 0 10 16" fill="#47576d">
              <path d="M0 0V16L10 8Z" />
            </svg>
          </SmallButton>
          <div className="flex-1" />
          <SmallButton>
            <Bars n={1} />
          </SmallButton>
          <SmallButton>
            <Bars n={2} />
          </SmallButton>
          <SmallButton active>
            <Bars n={3} />
          </SmallButton>
        </div>
        <div className="mt-2 flex h-[30px] items-center">
          <div className="size-[30px] border-2 border-[#c8c8c8] bg-white" />
          <span className="mr-1.5 ml-2 pt-[3px] text-[21px] text-[#666]">Show history</span>
          <Caret w={13} h={7} color="#000" />
        </div>
      </div>
    </div>
  );
}

/* ---------- bottom ---------- */

function TabBar() {
  const icon = { fill: "none", stroke: "#666", strokeWidth: 2, width: 62, height: 58 };
  return (
    <div className="flex h-[62px] shrink-0 border-t border-b-2 border-t-[#c4c4c4] border-b-[#d0d0d0] bg-[#e6e6e6] text-2xl text-[#555]">
      <div className="flex w-[260px] items-center pl-[19px]">
        <svg width={29} height={26} viewBox="0 0 29 26" fill="none" stroke="#666" strokeWidth={2}>
          <ellipse cx={9} cy={6.500} rx={7} ry={4} />
          <path d="M2 6.500V19C2 24 16 24 16 19V6.500" />
        </svg>
        <span className="tracking-[0.3px]">Data Source</span>
      </div>
      <div className="flex w-[117px] items-center border-r-2 border-l-2 border-[#d0d0d0] bg-[#fafafa] pl-3 font-bold tracking-[0.8px] text-[#444]">
        Sheet 1
      </div>
      {[2, 3, 4, 5, 6, 7, 8, 9].map((n) => (
        <div key={n} className="flex w-[114px] items-center border-r-2 border-[#c8c8c8] pl-3 tracking-[0.5px]">
          Sheet {n}
        </div>
      ))}
      <div className="w-16 border-r-2 border-[#c8c8c8]">
        <svg viewBox="1290 1500 62 58" {...icon}>
          <path d="M1329 1530V1517H1309V1538H1322M1315 1531V1533M1319.500 1521V1533M1324 1525V1533" />
          <Plus x={1330} y={1538} r={6.500} c="#666" s={3.500} />
        </svg>
      </div>
      <div className="w-16 border-r-2 border-[#c8c8c8]">
        <svg viewBox="1354 1500 62 58" {...icon}>
          <path d="M1392 1530V1517H1372V1538H1386M1372 1527H1392M1382 1517V1538" />
          <Plus x={1394} y={1538} r={6.500} c="#666" s={3.500} />
        </svg>
      </div>
      <div className="w-16 border-r-2 border-[#c8c8c8]">
        <svg viewBox="1418 1500 62 58" {...icon}>
          <path d="M1457 1530V1517L1447 1521L1437 1517V1534L1447 1539V1521" />
          <Plus x={1457} y={1538} r={6.500} c="#666" s={3.500} />
        </svg>
      </div>
    </div>
  );
}

function StatusBar() {
  const g = "#bababa";
  return (
    <div className="flex h-10 shrink-0 items-center bg-[#ebebeb] text-[21px] text-black">
      <span className="w-[121px] pl-6">53 marks</span>
      <span className="w-[198px] pl-[23px] tracking-[-0.15px]">1 row by 1 column</span>
      <span className="pl-6 tracking-[0.25px]">SUM of AVG(X): -6,488.6527</span>
      <svg width={752} height={40} viewBox="1808 1560 752 40" className="ml-auto" fill={g}>
        <path d="M1809 1561V1600M2064 1561V1600M2117 1561V1600M2173 1561V1600M2265 1561V1600M2407 1561V1600" stroke="#c8c8c8" strokeWidth={2} />
        <path d="M2282 1572H2284V1586H2282ZM2294 1572V1586L2286 1579ZM2324 1572V1586L2316 1579ZM2348 1572V1586L2356 1579ZM2378 1572V1586L2386 1579ZM2388 1572H2390V1586H2388Z" />
        {[0, 8, 16].map((dx) =>
          [0, 8, 16].map((dy) => <rect key={`${dx}-${dy}`} x={2425 + dx} y={1569 + dy} width={6} height={6} rx={1} />),
        )}
        <rect x={2467} y={1569} width={22} height={14} rx={1} />
        {[0, 8, 16].map((dx) => (
          <rect key={dx} x={2467 + dx} y={1585} width={6} height={6} rx={1} />
        ))}
        <rect x={2509} y={1569} width={22} height={22} rx={1} fill="#666" />
      </svg>
    </div>
  );
}

export default function App() {
  return (
    <div className={`flex h-[1600px] w-[2560px] flex-col overflow-hidden bg-[#f4f4f4] ${ui}`}>
      <Toolbar />
      <div className="flex h-[1418px] shrink-0 gap-3 pr-3">
        <DataPane />
        <ShelfColumn />
        <div className="flex min-w-0 flex-1 flex-col gap-3 pb-3">
          <Shelf label="Columns" pill="X">
            <svg width={50} height={52} viewBox="754 82 50 52" fill="none" stroke="#666" strokeWidth={4}>
              <path d="M770 94V118M778 94V118M786 94V118" strokeDasharray="4 2 18" />
            </svg>
          </Shelf>
          <Shelf label="Rows" pill="Y">
            <svg width={50} height={52} viewBox="754 150 50 52" fill="none" stroke="#666" strokeWidth={4}>
              <path d="M766 166H790M766 174H790M766 182H790" strokeDasharray="4 2 18" />
            </svg>
          </Shelf>
          <div className="flex min-h-0 flex-1 gap-3">
            <div className="flex-1 border-2 border-[#d4d4d4] bg-white">
              <div className="flex h-[86px] items-center pt-[13px] pl-5 font-['Open_Sans',sans-serif] text-[40px] font-light tracking-[1.1px] text-[#222] [word-spacing:-3px]">
                Sheet 1 - May 2015
              </div>
              <MapView />
            </div>
            <RightColumn />
          </div>
        </div>
      </div>
      <TabBar />
      <StatusBar />
    </div>
  );
}
